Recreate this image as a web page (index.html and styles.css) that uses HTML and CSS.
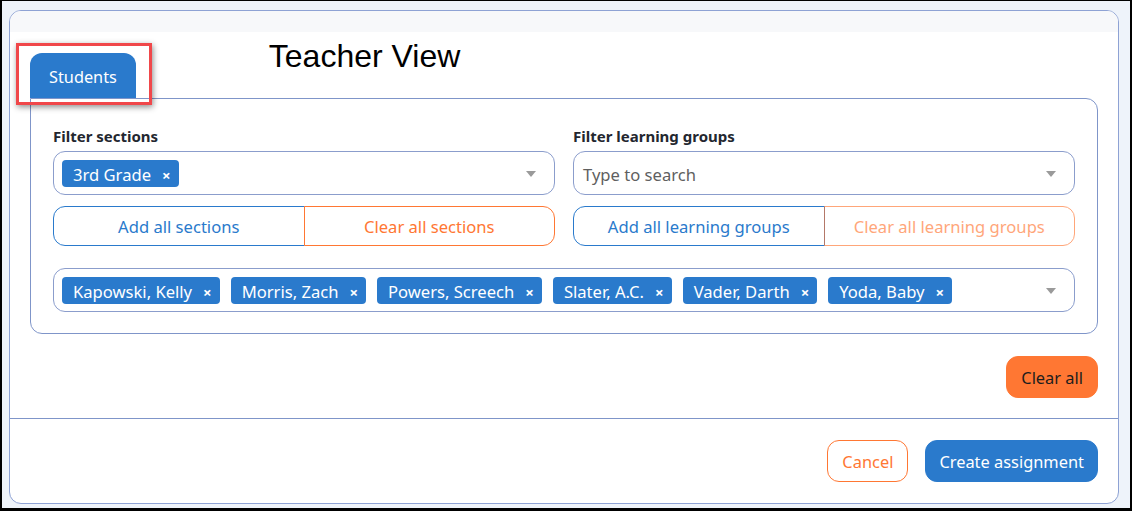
FILE: index.html
```html
<!DOCTYPE html>
<html lang="en">
<head>
    <meta charset="UTF-8">
    <meta name="viewport" content="width=device-width, initial-scale=1.0">
    <title>Teacher View</title>
    <link rel="stylesheet" href="styles.css">
</head>
<body>

    <div class="frame">
        <div class="modal">
            <div class="modal-header"></div>

            <div class="modal-body">
                <!-- Tabs + page title -->
                <div class="tab-row">
                    <div class="tab active">Students</div>
                    <h1 class="view-title">Teacher View</h1>
                    <div class="callout"></div>
                </div>

                <div class="tab-panel">
                    <div class="filters">
                        <div class="filter">
                            <label class="filter-label">Filter sections</label>
                            <div class="select">
                                <span class="chip">3rd Grade<span class="chip-x">&times;</span></span>
                                <span class="caret"></span>
                            </div>
                            <div class="btn-group">
                                <button class="btn-outline blue">Add all sections</button>
                                <button class="btn-outline orange">Clear all sections</button>
                            </div>
                        </div>

                        <div class="filter">
                            <label class="filter-label">Filter learning groups</label>
                            <div class="select">
                                <span class="placeholder">Type to search</span>
                                <span class="caret"></span>
                            </div>
                            <div class="btn-group">
                                <button class="btn-outline blue">Add all learning groups</button>
                                <button class="btn-outline orange" disabled>Clear all learning groups</button>
                            </div>
                        </div>
                    </div>

                    <!-- Selected students -->
                    <div class="select students">
                        <span class="chip">Kapowski, Kelly<span class="chip-x">&times;</span></span>
                        <span class="chip">Morris, Zach<span class="chip-x">&times;</span></span>
                        <span class="chip">Powers, Screech<span class="chip-x">&times;</span></span>
                        <span class="chip">Slater, A.C.<span class="chip-x">&times;</span></span>
                        <span class="chip">Vader, Darth<span class="chip-x">&times;</span></span>
                        <span class="chip">Yoda, Baby<span class="chip-x">&times;</span></span>
                        <span class="caret"></span>
                    </div>
                </div>

                <div class="clear-row">
                    <button class="btn btn-orange">Clear all</button>
                </div>
            </div>

            <div class="modal-footer">
                <button class="btn btn-cancel">Cancel</button>
                <button class="btn btn-blue">Create assignment</button>
            </div>
        </div>
    </div>

</body>
</html>
```

FILE: styles.css
```css
* {
    box-sizing: border-box;
    margin: 0;
    padding: 0;
    font-family: "Noto Sans", sans-serif;
}

body {
    width: 1132px;
    height: 511px;
    background: #000;
}

.frame {
    height: 511px;
    border-style: solid;
    border-color: #000;
    border-width: 1px 2px 3px 2px;
    background: #eef3fa;
    padding: 9px 11px 4px 7px;
}

/* Modal */
.modal {
    background: #fff;
    border: 1px solid #8ea2d4;
    border-radius: 12px;
    overflow: hidden;
}

.modal-header {
    height: 21px;
    background: #f7f8fa;
}

.modal-body {
    padding: 6px 20px 20px 20px;
}

/* Tabs */
.tab-row {
    position: relative;
    display: flex;
    align-items: flex-start;
}

.tab {
    margin-top: 15px;
    height: 45px;
    padding: 12px 19px 9px;
    background: #2a7acc;
    color: #fff;
    font-size: 16.3px;
    line-height: 24px;
    border-radius: 12px 12px 0 0;
}

.view-title {
    margin-left: 133px;
    font-family: "Liberation Sans", Arial, sans-serif;
    font-size: 32px;
    font-weight: normal;
    line-height: 37px;
    color: #000;
}

/* red highlight box round the tab */
.callout {
    position: absolute;
    left: -14px;
    top: 5px;
    width: 136px;
    height: 62px;
    border: 3px solid #f0474a;
    box-shadow: 1px 2px 6px rgba(0, 0, 0, 0.45);
}

.tab-panel {
    border: 1px solid #7f95c9;
    border-radius: 0 12px 12px 12px;
    padding: 26px 22px 21px;
}

.filters {
    display: flex;
    gap: 18px;
}

.filter {
    flex: 1;
}

.filter-label {
    display: block;
    font-size: 15px;
    font-weight: bold;
    line-height: 22px;
    color: #23272f;
    margin-bottom: 4px;
}

/* Multi select */
.select {
    display: flex;
    align-items: center;
    flex-wrap: wrap;
    gap: 11px;
    height: 44px;
    padding: 8px 18px 8px 8px;
    border: 1px solid #8b9dcc;
    border-radius: 12px;
}

.placeholder {
    padding: 2px 0 0 1px;
    font-size: 16.6px;
    line-height: 26px;
    color: #5f5f5f;
}

.chip {
    display: flex;
    align-items: center;
    height: 27px;
    padding: 2px 8px 0 11px;
    background: #2a7acc;
    color: #fff;
    font-size: 16.6px;
    border-radius: 4px;
}

.chip-x {
    margin-left: 11px;
    font-size: 15px;
    font-weight: bold;
}

.caret {
    margin-left: auto;
    width: 0;
    height: 0;
    border-left: 5px solid transparent;
    border-right: 5px solid transparent;
    border-top: 6px solid #9a9a9a;
}

.students {
    margin-top: 22px;
}

/* Add / clear groups */
.btn-group {
    display: flex;
    margin-top: 11px;
}

.btn-outline {
    flex: 1;
    height: 40px;
    padding-top: 1px;
    background: #fff;
    font-size: 16.6px;
    cursor: pointer;
}

.btn-outline.blue {
    color: #2a7acc;
    border: 1px solid #2a7acc;
    border-radius: 12px 0 0 12px;
}

.btn-outline.orange {
    margin-left: -1px;
    color: #ff7733;
    border: 1px solid #ff7733;
    border-radius: 0 12px 12px 0;
}

.btn-outline.orange:disabled {
    opacity: 0.65;
}

/* Buttons */
.btn {
    height: 42px;
    padding: 1px 12px 0;
    font-size: 16.4px;
    border-radius: 12px;
    cursor: pointer;
}

.clear-row {
    display: flex;
    justify-content: flex-end;
    margin-top: 22px;
}

.btn-orange {
    padding: 1px 14px 0;
    background: #ff7733;
    border: 1px solid #ff7733;
    color: #1d1d1d;
}

.modal-footer {
    display: flex;
    justify-content: flex-end;
    gap: 17px;
    border-top: 1px solid #7f95c9;
    padding: 21px 20px 21px;
}

.btn-cancel {
    padding: 1px 14px 0;
    background: #fff;
    border: 1px solid #ff7733;
    color: #ff7733;
}

.btn-blue {
    padding: 1px 13px 0;
    background: #2a7acc;
    border: 1px solid #2a7acc;
    color: #fff;
}
```
